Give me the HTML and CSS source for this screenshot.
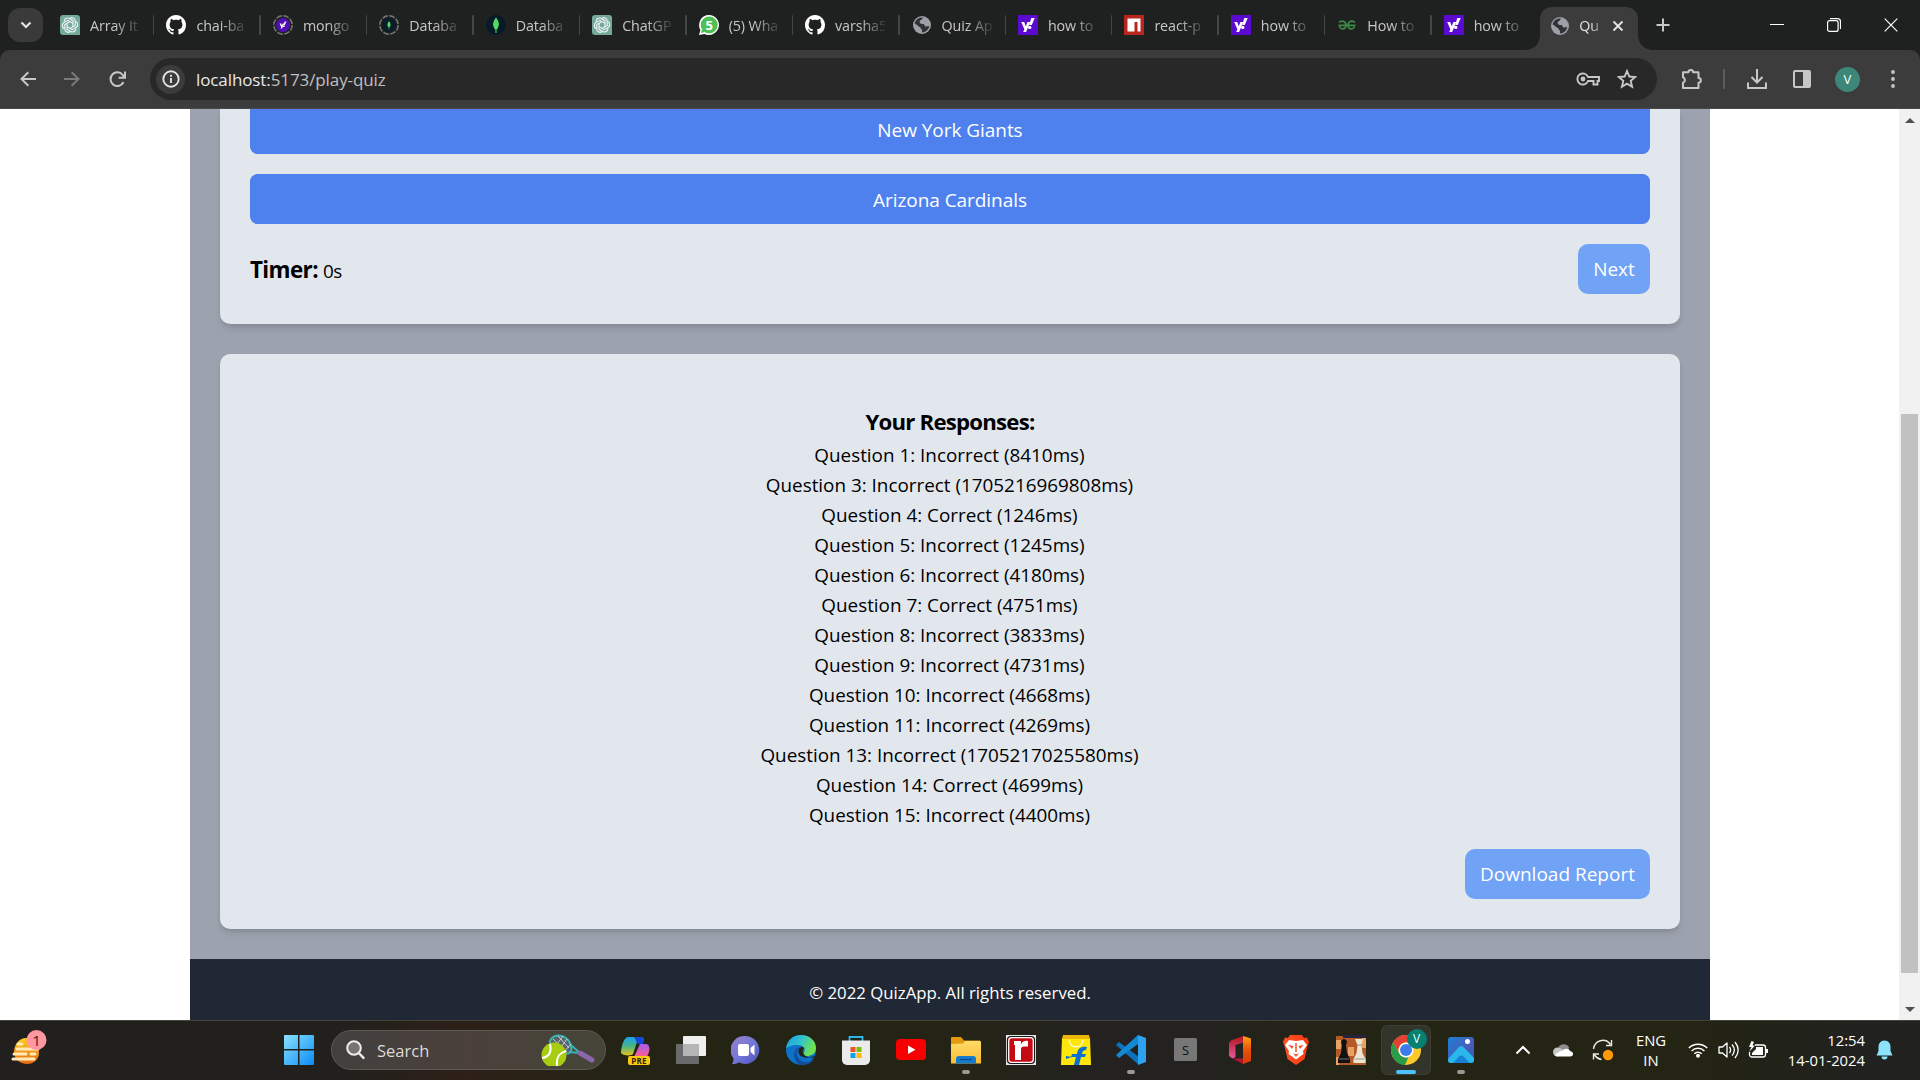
FILE: index.html
```html
<!DOCTYPE html>
<html lang="en">
<head>
<meta charset="utf-8">
<title>Quiz App</title>
<link rel="stylesheet" href="styles.css">
</head>
<body>
<svg class="defs" width="0" height="0" aria-hidden="true">
  <defs>
    <linearGradient id="g-start" x1="0" y1="0" x2="1" y2="1"><stop offset="0" stop-color="#8be1ff"/><stop offset="1" stop-color="#0a8cf5"/></linearGradient>
    <linearGradient id="g-egg" x1="0" y1="0" x2="0" y2="1"><stop offset="0" stop-color="#ffcf20"/><stop offset="1" stop-color="#e56a10"/></linearGradient>
    <linearGradient id="g-cop1" x1="0" y1="0" x2="0" y2="1"><stop offset="0" stop-color="#1aa0f0"/><stop offset=".5" stop-color="#47b585"/><stop offset="1" stop-color="#e9c51c"/></linearGradient>
    <linearGradient id="g-cop2" x1="0" y1="0" x2="0" y2="1"><stop offset="0" stop-color="#a55cf0"/><stop offset="1" stop-color="#ff5f87"/></linearGradient>
    <linearGradient id="g-chat" x1="0" y1="0" x2="1" y2="1"><stop offset="0" stop-color="#9a83c9"/><stop offset=".5" stop-color="#7377d8"/><stop offset="1" stop-color="#4d50b8"/></linearGradient>
    <linearGradient id="g-edge" x1="0" y1="0" x2="1" y2=".4"><stop offset="0" stop-color="#1c9de0"/><stop offset=".5" stop-color="#2fc0d0"/><stop offset="1" stop-color="#6fe34f"/></linearGradient>
    <linearGradient id="g-folder" x1="0" y1="0" x2="0" y2="1"><stop offset="0" stop-color="#ffdb6a"/><stop offset="1" stop-color="#fbbd32"/></linearGradient>
    <linearGradient id="g-off" x1="0" y1="0" x2="0" y2="1"><stop offset="0" stop-color="#b3151c"/><stop offset="1" stop-color="#e45aa0"/></linearGradient>
    <linearGradient id="g-off2" x1="0" y1="0" x2="0" y2="1"><stop offset="0" stop-color="#ffa514"/><stop offset=".5" stop-color="#e8500c"/><stop offset="1" stop-color="#da3a05"/></linearGradient>
    <linearGradient id="g-brave" x1="0" y1="0" x2="1" y2="0"><stop offset="0" stop-color="#ff5226"/><stop offset="1" stop-color="#f83a10"/></linearGradient>
    <linearGradient id="g-photo" x1="0" y1="0" x2="1" y2="1"><stop offset="0" stop-color="#1c7fd6"/><stop offset=".6" stop-color="#4a5bb8"/><stop offset="1" stop-color="#1b66c4"/></linearGradient>
    <symbol id="openai" viewBox="0 0 20 20">
      <path d="M3 0h14a3 3 0 0 1 3 3v17H3a3 3 0 0 1-3-3V3a3 3 0 0 1 3-3z" fill="#74a99b"/>
      <g fill="none" stroke="#eef5f2" stroke-width="1.150">
        <path d="M10 3.200a3.400 3.400 0 0 1 5.200 3v4.200l-5.200 3"/>
        <path d="M10 3.200a3.400 3.400 0 0 1 5.200 3v4.200l-5.200 3" transform="rotate(60 10 10)"/>
        <path d="M10 3.200a3.400 3.400 0 0 1 5.200 3v4.200l-5.200 3" transform="rotate(120 10 10)"/>
        <path d="M10 3.200a3.400 3.400 0 0 1 5.200 3v4.200l-5.200 3" transform="rotate(180 10 10)"/>
        <path d="M10 3.200a3.400 3.400 0 0 1 5.200 3v4.200l-5.200 3" transform="rotate(240 10 10)"/>
        <path d="M10 3.200a3.400 3.400 0 0 1 5.200 3v4.200l-5.200 3" transform="rotate(300 10 10)"/>
      </g>
    </symbol>
    <symbol id="github" viewBox="0 0 16 16"><path fill="#fff" d="M8 0C3.58 0 0 3.58 0 8c0 3.54 2.29 6.53 5.47 7.59.4.07.55-.17.55-.38 0-.19-.01-.82-.01-1.49-2.01.37-2.53-.49-2.69-.94-.09-.23-.48-.94-.82-1.13-.28-.15-.68-.52-.01-.53.63-.01 1.08.58 1.23.82.72 1.21 1.87.87 2.33.66.07-.52.28-.87.51-1.07-1.78-.2-3.64-.89-3.64-3.95 0-.87.31-1.59.82-2.15-.08-.2-.36-1.02.08-2.12 0 0 .67-.21 2.2.82.64-.18 1.32-.27 2-.27s1.36.09 2 .27c1.53-1.04 2.2-.82 2.2-.82.44 1.1.16 1.92.08 2.12.51.56.82 1.27.82 2.15 0 3.07-1.87 3.75-3.65 3.95.29.25.54.73.54 1.48 0 1.07-.01 1.93-.01 2.2 0 .21.15.46.55.38A8.01 8.01 0 0 0 16 8c0-4.42-3.58-8-8-8z"/></symbol>
    <symbol id="yahoo-mark" viewBox="0 0 20 20"><path d="M3.200 7h3l1.600 4.200L9.400 7h2.900l-4.200 10h-2.900l1.200-2.700z" fill="#fff"/><path d="M13.300 3h3.400l-2.900 7h-2.600z" fill="#fff"/><circle cx="11.700" cy="12.400" r="1.700" fill="#fff"/></symbol>
    <symbol id="yahoo" viewBox="0 0 20 20"><rect width="20" height="20" fill="#5b0bd0"/><use href="#yahoo-mark"/></symbol>
    <symbol id="globe" viewBox="0 0 20 20"><circle cx="10" cy="10" r="9" fill="#9aa0a6"/><path d="M11 2.600c-1 1-.5 2-2 2.400-1.600.4-1.600 1.800-1 3 1 1.500 3.500.4 4.300 1.500.5 1 .2 1.700 1.300 2 1.400.3 2.400-.4 3.600-.4-.3 3.400-3.500 6.400-7.200 6.400v-3c-1.500-.3-1.800-1.600-1.500-2.500-2 .2-3.300-2.800-5.800-3.600C3 5.500 6.500 1.800 11 2.600z" fill="#303134"/></symbol>
    <symbol id="leaf" viewBox="0 0 20 20"><path d="M10 2.500c3 4 4.400 8 .5 12.200V18h-1v-3.300C5.600 10.500 7 6.500 10 2.500z" fill="#4fdc63"/></symbol>
  </defs>
</svg>

<div class="screen">
  <header class="tabstrip">
    <button class="tab-search"><svg width="12" height="8" viewBox="0 0 12 8"><path d="M1.500 1.500 6 6l4.500-4.500" fill="none" stroke="#e3e3e3" stroke-width="2.200"/></svg></button>
    <nav class="tabs">
      <div class="tab"><svg class="fav"><use href="#openai"/></svg><span>Array It</span></div>
      <div class="tab"><svg class="fav"><use href="#github"/></svg><span>chai-ba</span></div>
      <div class="tab"><svg class="fav" viewBox="0 0 20 20"><circle cx="10" cy="10" r="9.200" fill="none" stroke="#777" stroke-width="1.500" stroke-dasharray="5.800 1.425"/><circle cx="10" cy="10" r="7" fill="#5010b0"/><use href="#yahoo-mark" x="5" y="5" width="10" height="10"/></svg><span>mongo</span></div>
      <div class="tab"><svg class="fav" viewBox="0 0 20 20"><circle cx="10" cy="10" r="9.200" fill="none" stroke="#777" stroke-width="1.500" stroke-dasharray="5.800 1.425"/><circle cx="10" cy="10" r="7" fill="#0a1c28"/><use href="#leaf" x="4.500" y="4.500" width="11" height="11"/></svg><span>Databa</span></div>
      <div class="tab"><svg class="fav" viewBox="0 0 20 20"><circle cx="10" cy="10" r="10" fill="#061a28"/><use href="#leaf" width="20" height="20"/></svg><span>Databa</span></div>
      <div class="tab"><svg class="fav"><use href="#openai"/></svg><span>ChatGP</span></div>
      <div class="tab"><svg class="fav" viewBox="0 0 20 20"><path d="M10 0a10 10 0 1 1-4.600 18.900L0 20l1.400-5A10 10 0 0 1 10 0z" fill="#fff"/><circle cx="10.200" cy="9.900" r="8.500" fill="#4fbf55"/><path d="M2 18l1-4 3 3z" fill="#4fbf55"/><text x="10.200" y="14.500" class="badge-5">5</text></svg><span>(5) Wha</span></div>
      <div class="tab"><svg class="fav"><use href="#github"/></svg><span>varsha5</span></div>
      <div class="tab"><svg class="fav"><use href="#globe"/></svg><span>Quiz Ap</span></div>
      <div class="tab"><svg class="fav"><use href="#yahoo"/></svg><span>how to</span></div>
      <div class="tab"><svg class="fav" viewBox="0 0 20 20"><rect width="20" height="20" fill="#b9261c"/><path d="M3.500 3.500h13v13h-3V7h-3v9.500h-7z" fill="#fff"/></svg><span>react-p</span></div>
      <div class="tab"><svg class="fav"><use href="#yahoo"/></svg><span>how to</span></div>
      <div class="tab"><svg class="fav" viewBox="0 0 20 20"><g fill="none" stroke="#3c8a45" stroke-width="1.700"><path d="M2 7.500C4.500 5 9 6 9 10.300S4 15 2.300 11.500M1.500 10.300h17M18 7.500C15.500 5 11 6 11 10.300s5 4.700 6.700 1.200"/></g></svg><span>How to</span></div>
      <div class="tab"><svg class="fav"><use href="#yahoo"/></svg><span>how to</span></div>
      <div class="tab active"><svg class="fav"><use href="#globe"/></svg><span>Qu</span><svg class="tab-close" width="12" height="12" viewBox="0 0 12 12"><path d="M1.500 1.500l9 9M10.500 1.500l-9 9" stroke="#e3e3e3" stroke-width="1.900"/></svg></div>
    </nav>
    <svg class="new-tab" width="14" height="14" viewBox="0 0 14 14"><path d="M7 .5v13M.5 7h13" stroke="#c7c7c7" stroke-width="2"/></svg>
    <div class="win-controls">
      <svg width="14" height="14" viewBox="0 0 14 14"><path d="M0 6.500h14" stroke="#fff" stroke-width="1"/></svg>
      <svg width="14" height="14" viewBox="0 0 14 14"><rect x=".6" y="2.600" width="10.500" height="10.800" rx="2" fill="none" stroke="#fff" stroke-width="1.200"/><path d="M3 .6h7.500a3 3 0 0 1 3 3V11" fill="none" stroke="#fff" stroke-width="1.200"/></svg>
      <svg width="14" height="14" viewBox="0 0 14 14"><path d="M.7.7l12.600 12.600M13.300.7.7 13.300" stroke="#fff" stroke-width="1.200"/></svg>
    </div>
  </header>

  <div class="toolbar-wrap"><div class="toolbar">
    <svg class="t-back" width="16" height="16" viewBox="0 0 16 16"><path d="M16 8H1.500M8.300 1.200 1.500 8l6.800 6.800" fill="none" stroke="#c7c7c7" stroke-width="2"/></svg>
    <svg class="t-fwd" width="16" height="16" viewBox="0 0 16 16"><path d="M0 8h14.500M7.700 1.200 14.500 8l-6.800 6.800" fill="none" stroke="#7b7b7b" stroke-width="2"/></svg>
    <svg class="t-reload" width="17" height="17" viewBox="0 0 17 17"><path d="M14.500 11A6.800 6.800 0 1 1 13.700 4L15.500 6" fill="none" stroke="#c7c7c7" stroke-width="2"/><path d="M16 .5v6.300H9.700" fill="none" stroke="#c7c7c7" stroke-width="2"/></svg>
    <div class="omnibox">
      <span class="site-info"><svg width="18" height="18" viewBox="0 0 18 18"><circle cx="9" cy="9" r="7.700" fill="none" stroke="#e3e3e3" stroke-width="1.900"/><path d="M9 8v5M9 4.800v1.900" stroke="#e3e3e3" stroke-width="1.900"/></svg></span>
      <span class="url"><b>localhost:</b>5173/play-quiz</span>
      <svg class="key" width="24" height="16" viewBox="0 0 24 16"><path d="M12 6h11v4h-1.500v3.500h-4V10H12a5.500 5.500 0 1 1 0-4z" fill="none" stroke="#c7c7c7" stroke-width="1.900"/><circle cx="7" cy="8" r="2.400" fill="#c7c7c7"/></svg>
      <svg class="star" width="20" height="20" viewBox="0 0 20 20"><path d="M10 2l2.300 5.500 5.900.5-4.500 3.900 1.400 5.800L10 14.600l-5.100 3.100 1.400-5.800L1.800 8l5.900-.5z" fill="none" stroke="#c7c7c7" stroke-width="1.900"/></svg>
    </div>
    <svg class="t-ext" width="22" height="22" viewBox="0 0 22 22"><path d="M2 4.300h5.500a2.300 2.300 0 0 1 4.600 0h5.400v5.800a2.300 2.300 0 0 1 0 4.600V20H2v-5.200a3 3 0 0 0 0-5.600z" fill="none" stroke="#c7c7c7" stroke-width="2" stroke-linejoin="round"/></svg>
    <i class="t-sep"></i>
    <svg class="t-down" width="20" height="20" viewBox="0 0 20 20"><path d="M10 0v13M4.500 8l5.500 5.500L15.500 8M1 13.500v5.400h18v-5.400" fill="none" stroke="#c7c7c7" stroke-width="2"/></svg>
    <svg class="t-side" width="18" height="18" viewBox="0 0 18 18"><rect x="1" y="1" width="16" height="16" rx="1" fill="none" stroke="#c7c7c7" stroke-width="2"/><path d="M10 1h7v16h-7z" fill="#c7c7c7"/></svg>
    <span class="avatar">V</span>
    <svg class="t-menu" width="4" height="18" viewBox="0 0 4 18"><g fill="#c7c7c7"><circle cx="2" cy="2" r="1.900"/><circle cx="2" cy="9" r="1.900"/><circle cx="2" cy="16" r="1.900"/></g></svg>
  </div></div>

  <div class="viewport">
    <main class="app">
      <section class="card quiz">
        <button class="option first">New York Giants</button>
        <button class="option">Arizona Cardinals</button>
        <div class="row"><p class="timer"><strong>Timer:</strong> <span>0s</span></p><button class="btn next">Next</button></div>
      </section>
      <section class="card results">
        <h2>Your Responses:</h2>
        <ul>
          <li>Question 1: Incorrect (8410ms)</li>
          <li>Question 3: Incorrect (1705216969808ms)</li>
          <li>Question 4: Correct (1246ms)</li>
          <li>Question 5: Incorrect (1245ms)</li>
          <li>Question 6: Incorrect (4180ms)</li>
          <li>Question 7: Correct (4751ms)</li>
          <li>Question 8: Incorrect (3833ms)</li>
          <li>Question 9: Incorrect (4731ms)</li>
          <li>Question 10: Incorrect (4668ms)</li>
          <li>Question 11: Incorrect (4269ms)</li>
          <li>Question 13: Incorrect (1705217025580ms)</li>
          <li>Question 14: Correct (4699ms)</li>
          <li>Question 15: Incorrect (4400ms)</li>
        </ul>
        <button class="btn download">Download Report</button>
      </section>
      <footer>© 2022 QuizApp. All rights reserved.</footer>
    </main>
    <aside class="scrollbar">
      <svg width="10" height="5" viewBox="0 0 10 5"><path d="M0 5l5-5 5 5z" fill="#505050"/></svg>
      <div class="thumb"></div>
      <svg width="10" height="5" viewBox="0 0 10 5"><path d="M0 0h10L5 5z" fill="#505050"/></svg>
    </aside>
  </div>

  <footer class="taskbar">
    <svg class="widget" width="36" height="36" viewBox="0 0 36 36"><path d="M15 8c8 0 13 9 13 15s-5 11-12 11S3 29 3 22 8 8 15 8z" fill="url(#g-egg)"/><g stroke="#ffe9b8" stroke-width="3" stroke-linecap="round"><path d="M7 14h4M6 19h21M3 24h12M20 24h4M2 29h21"/></g><circle cx="25.500" cy="10" r="10" fill="#ff96a0"/><text x="25.500" y="15.500" class="w-num">1</text></svg>
    <svg class="start" width="30" height="30" viewBox="0 0 30 30"><path d="M1 0h13v14H0V1a1 1 0 0 1 1-1zM15.500 0H29a1 1 0 0 1 1 1v13H15.500zM0 15.500h14V30H1a1 1 0 0 1-1-1zM15.500 15.500H30V29a1 1 0 0 1-1 1H15.500z" fill="url(#g-start)"/></svg>
    <div class="search">
      <svg width="20" height="20" viewBox="0 0 20 20"><circle cx="8" cy="8" r="6.800" fill="#777472" stroke="#eee" stroke-width="2"/><path d="M12.800 13l5.400 5.700" stroke="#eee" stroke-width="2.400"/></svg>
      <span>Search</span>
      <svg class="tennis" width="54" height="32" viewBox="0 0 54 32"><path d="M10 5C15-1 25 1 29 9c4 9-1 13-8 9S6 10 10 5z" fill="#58646a" stroke="#38b5b8" stroke-width="2"/><path d="M12 5l14 13M17 2l11 12M11 9l11 10M22 2l-9 12M26 5l-9 12M30 10l-8 9" stroke="#d5dddd" stroke-width=".9"/><path d="M30 11l9 8-11-1" fill="none" stroke="#38b5b8" stroke-width="1.800"/><path d="M39 19l12 7" stroke="#8967a8" stroke-width="5" stroke-linecap="round"/><circle cx="13" cy="21" r="12.500" fill="#a7cc12"/><path d="M9 10c2 8-1 13-8 14M25 17c-7 2-10 6-9 15" fill="none" stroke="#fff" stroke-width="2"/></svg>
    </div>
    <div class="apps">
      <div class="app-icon"><svg viewBox="0 0 30 30"><path d="M7 2h13c3 0 3 3 2 5h-6l-4 12c-1 2-10 2-12-1C0 12 3 2 7 2z" fill="url(#g-cop1)"/><path d="M13 2h7c3 0 3 3 2 7h-4c-3 0-3-5-5-7z" fill="#1648d8"/><path d="M19 9h6c3 0 4 4 3 8l-2 5H13z" fill="url(#g-cop2)"/><rect x="7" y="21" width="22" height="9" rx="2" fill="#fdc910"/><text x="18" y="28.500" class="pre">PRE</text></svg></div>
      <div class="app-icon"><svg viewBox="0 0 30 30"><rect y="9" width="23" height="20" rx="1" fill="#6a6a6a"/><rect x="7" y="1" width="23" height="20" rx="1" fill="#efefef"/><path d="M7 9h16v12H7z" fill="#b5b5b5"/></svg></div>
      <div class="app-icon"><svg viewBox="0 0 30 30"><path d="M15 1a14 14 0 1 1-7 26.500c-2 1-4 1.500-7 1.500 1-1.500 1.500-3 1.500-5.500A14 14 0 0 1 15 1z" fill="url(#g-chat)"/><rect x="7" y="9" width="11" height="12" rx="2" fill="#fff"/><path d="M19.500 13l4-3.500v11l-4-3.500z" fill="#fff"/></svg></div>
      <div class="app-icon"><svg viewBox="0 0 30 30"><circle cx="15" cy="15" r="15" fill="#0d71ca"/><path d="M0 14C1 5 7 0 15 0c9 0 15 6 15 13 0 6-5 8-9 8-3 0-4-2-3-3 2-5-1-8-6-8-6 0-11 2-12 4z" fill="url(#g-edge)"/><path d="M13 12c-5 6-1 15 7 15 4 0 6-1 8-3-3 5-8 6-13 6C8 29 5 15 13 12z" fill="#104f9e"/><path d="M17.500 19c-1-.8-1.300-4 .8-5.500-2-3-6-1-6 2.500 0 5 6 9 16 5l1.700 2.500V21c-3 3-10 2-12.500-2z" fill="#242416"/></svg></div>
      <div class="app-icon"><svg viewBox="0 0 30 30"><path d="M8.500 7V2h13v5" fill="none" stroke="#2db5ee" stroke-width="1.800"/><path d="M1 5.500h28V25a5 5 0 0 1-5 5H6a5 5 0 0 1-5-5z" fill="#ebebeb"/><path d="M9.500 12h5v5h-5z" fill="#f0512a"/><path d="M15.500 12h5v5h-5z" fill="#80bb0a"/><path d="M9.500 18h5v5h-5z" fill="#0ba4ee"/><path d="M15.500 18h5v5h-5z" fill="#ffb90b"/></svg></div>
      <div class="app-icon"><svg viewBox="0 0 30 30"><rect y="4" width="30" height="21" rx="4" fill="#f80000"/><path d="M12 10.500v8.500l7.500-4.200z" fill="#fff"/></svg></div>
      <div class="app-icon run"><svg viewBox="0 0 30 30"><path d="M0 3a1 1 0 0 1 1-1h9l3 3.500h16v6H0z" fill="#e39a0d"/><path d="M0 9l12-.500 2-2.500h15a1 1 0 0 1 1 1v21.500H0z" fill="url(#g-folder)"/><path d="M5 28.500V24a3 3 0 0 1 3-3h14a3 3 0 0 1 3 3v4.500z" fill="#157bcd"/><path d="M9 24.500h12" stroke="#0a4d91" stroke-width="1.300"/></svg></div>
      <div class="app-icon"><svg viewBox="0 0 30 30"><path fill="#e6e6e6" d="M0 0h30v30H0z"/><rect x="1.500" y="1.500" width="27" height="27" rx="3.500" fill="#c40a12" stroke="#17181b" stroke-width="1.200"/><rect x="2.700" y="2.700" width="24.600" height="24.600" rx="3" fill="none" stroke="#fff" stroke-width="1.300"/><path d="M8 6h7v3c2-3 4-3.500 7-3v5.500h-4c-2 0-3 1-3 3V25H9V10H8z" fill="#fff"/></svg></div>
      <div class="app-icon"><svg viewBox="0 0 30 30"><path d="M1 3h28l1 27H0z" fill="#ffe70c"/><path d="M2 0h26l1 4H1z" fill="#edb60b"/><path d="M8 5c1 9 13 9 14 0" fill="none" stroke="#fff8c9" stroke-width="1.500"/><path d="M26 12c-6-1-9 1-10 7h-5l-1 3h5l-2 8h5l2-8h4l1-3h-4c0-3 2-4 4-4z" fill="#0a6fd0"/><path d="M5 21l6 1-6 2" fill="#0a6fd0"/></svg></div>
      <div class="app-icon run"><svg viewBox="0 0 30 30"><path d="M3 7l20 15v8L0 10z" fill="#0c73bd"/><path d="M0 20L22 0v9L3 23z" fill="#1389d4"/><path d="M22 0l8 3v24l-8 3z" fill="#2ea2ef"/></svg></div>
      <div class="app-icon"><svg viewBox="0 0 30 30"><rect x="3" y="3" width="23" height="23" rx="1.500" fill="#777"/><text x="14.500" y="19.500" class="s-letter">S</text></svg></div>
      <div class="app-icon"><svg viewBox="0 0 30 30"><path d="M17 1L5 5.500 3 8v13l3.500 2.500 3-1.500V10L17 7.500z" fill="url(#g-off)"/><path d="M17 1l8 2.500V26l-8 3z" fill="url(#g-off2)"/><path d="M6.500 23.500H17V29z" fill="#b3152a"/></svg></div>
      <div class="app-icon"><svg viewBox="0 0 30 30"><path d="M9 0h12l2 3 3-.500L28 7l-1.500 4-3 13L15 30l-8.500-6-3-13L2 7l2-4.500L7 3z" fill="url(#g-brave)"/><path d="M8 5l7 1 7-1 4 5-4 6 .5 3-3.500 2.500-4 3-4-3L7.500 19l.5-3-4-6z" fill="#fff"/><path d="M7 10l5.500 1-1.500 3-1.500-2zM23 10l-5.500 1 1.500 3 1.500-2zM12 18l3 1.500 3-1.500-3 4zM14.300 8h1.400v9h-1.400z" fill="#fa4620"/></svg></div>
      <div class="app-icon"><svg viewBox="0 0 30 30"><path fill="#b45a28" d="M0 1h30v29H0z"/><path fill="#e8a263" d="M0 5h5v9H0zM12 12h6v9h-6zM26 3h4v10h-4zM0 22h3v8H0z"/><path fill="#25233f" d="M7 0h23v3H7z"/><path d="M8 4a3 3 0 0 1 2.500 4.500L10 10l1 8 3 6v4H2v-4l3-6 1-8-.5-1.500A3 3 0 0 1 8 4z" fill="#11110f"/><path d="M19 4h8l-1.500 6 1 8 3 6v4h-12v-4l3-6 1-8z" fill="#ece5d0"/><path d="M3 24h10M18.500 24h10M20.500 10h5" stroke="#888" stroke-width=".8"/></svg></div>
      <div class="app-icon current"><svg viewBox="0 0 30 30"><circle cx="15" cy="15" r="15" fill="#fcc92b"/><path d="M2 7.500A15 15 0 0 1 28 7.500H15a7.500 7.500 0 0 0-6.500 11z" fill="#e34133"/><path d="M2 7.500l6.500 11.300a7.500 7.500 0 0 0 9 3.200L14 30A15 15 0 0 1 2 7.500z" fill="#2a9d48"/><circle cx="15" cy="15" r="7.500" fill="#fff"/><circle cx="15" cy="15" r="6" fill="#3d7bea"/></svg><em>V</em></div>
      <div class="app-icon run"><svg viewBox="0 0 30 30"><rect x="2" y="2" width="26" height="26" rx="3" fill="url(#g-photo)"/><path d="M2 24l11-12c1.500-1.500 3-1.500 4.500 0L28 23v2a3 3 0 0 1-3 3H5a3 3 0 0 1-3-3z" fill="#2ab8ea"/><path d="M7 28l6-6.500c1.500-1.500 3-1.500 4.500 0L24 28z" fill="#1880d6"/><circle cx="21.500" cy="6.500" r="2.500" fill="#fff"/></svg></div>
    </div>
    <div class="tray">
      <svg width="16" height="10" viewBox="0 0 16 10"><path d="M1.500 8.500L8 2l6.500 6.500" fill="none" stroke="#fff" stroke-width="2"/></svg>
      <svg width="20" height="14" viewBox="0 0 20 14"><path d="M5 8a6 6 0 0 1 11-4l-1 6z" fill="#8d8d89"/><path d="M4.500 13.500a4.500 4.500 0 0 1 0-9c3 0 6 3 8 5z" fill="#c6c6c4"/><path d="M2 12c2-2 5-4 7-4 2-3 7-3 8 0 4 .5 4 5.500 0 5.500H4z" fill="#fff"/></svg>
      <svg width="22" height="22" viewBox="0 0 22 22"><path d="M1.500 10C2.500 1.500 13-2 18.500 5.500M19.500 1v5.500H14M1.500 20.500V15H7M2.500 16c2 3 4 4 7 4.500" fill="none" stroke="#e8e8e4" stroke-width="1.400"/><circle cx="16" cy="16" r="5.200" fill="#ff9806"/></svg>
      <div class="lang">ENG<br>IN</div>
      <svg width="20" height="16" viewBox="0 0 20 16"><g fill="none" stroke="#fff" stroke-width="1.500"><path d="M.8 6a13 13 0 0 1 18.400 0M3.600 9a9 9 0 0 1 12.800 0M6.300 11.800a5.200 5.200 0 0 1 7.400 0"/></g><circle cx="10" cy="13.800" r="2" fill="#fff"/></svg>
      <svg width="21" height="18" viewBox="0 0 21 18"><path d="M1 6v6h3.500L9 16V2L4.500 6zM11.500 6c1.500 2 1.500 4 0 6M14 3.500c3 3.500 3 7.500 0 11M17 1c4 5 4 11 0 16" fill="none" stroke="#fff" stroke-width="1.300" stroke-linejoin="round"/></svg>
      <svg width="21" height="18" viewBox="0 0 21 18"><path d="M7 4h8a2.500 2.500 0 0 1 2.500 2.500v7A2.500 2.500 0 0 1 15 16H4a2.500 2.500 0 0 1-2.500-2.500V11" fill="none" stroke="#fff" stroke-width="1.300"/><path d="M8 6h7v8H4v-2l4-4zM18 8h2v4h-2z" fill="#fff"/><path d="M3.500 0L1 6h2.500L1 11l6-6.500H4.500L6 1z" fill="#fff"/></svg>
      <div class="clock">12:54<br>14-01-2024</div>
      <svg width="17" height="20" viewBox="0 0 17 20"><path d="M8.500.5c4 0 6 3 6 6.500v4l2 4.500H.5l2-4.500V7c0-3.500 2-6.500 6-6.500zM5.500 16.500h6a3 3 0 0 1-6 0z" fill="#8de3fb"/></svg>
    </div>
  </footer>
</div>
</body>
</html>
```
FILE: styles.css
```css
* { box-sizing: border-box; }
body { margin: 0; background: #202221; }
body, button { font-family: "Open Sans", "Noto Sans", sans-serif; }
button { border: 0; padding: 0; margin: 0; }
svg { display: block; flex: none; }
.defs { position: absolute; }
.screen { width: 1920px; height: 1080px; display: flex; flex-direction: column; overflow: hidden; }

/* tab strip */
.tabstrip { height: 50px; flex: none; display: flex; background: #1f2120; }
.tab-search { width: 35px; height: 34px; margin: 8px 5px 0 8px; border-radius: 12px; background: #3a3a3a; display: grid; place-items: center; }
.tabs { display: flex; flex: none; }
.tab { width: 106.450px; height: 50px; padding-left: 12px; display: flex; align-items: center; gap: 10px; color: #c7c7c7; font-size: 14.300px; letter-spacing: -.1px; }
.tab .fav { width: 20px; height: 20px; }
.tab span { width: 50px; flex: none; white-space: nowrap; -webkit-mask-image: linear-gradient(90deg, #000 50%, rgba(0,0,0,.15) 98%); mask-image: linear-gradient(90deg, #000 50%, rgba(0,0,0,.15) 98%); }
.tab:not(:nth-child(14)):not(.active)::after { content: ""; width: 2px; height: 20px; margin-left: 3px; background: #444645; border-radius: 1px; }
.tab.active { position: relative; width: 98px; height: 43px; margin: 7px 0 0 2px; padding: 0 0 6px 10px; border-radius: 12px 12px 0 0; background: #3c3c3c; color: #e3e3e3; }
.tab.active::before, .tab.active::after { content: ""; position: absolute; bottom: 0; width: 14px; height: 14px; }
.tab.active::before { left: -14px; background: radial-gradient(circle at 0 0, transparent 13.5px, #3c3c3c 14px); }
.tab.active::after { right: -14px; background: radial-gradient(circle at 100% 0, transparent 13.5px, #3c3c3c 14px); }
.tab.active span { width: 24px; margin-right: 4px; margin-left: -1px; }
.tab-close { margin-left: -5px; }
.new-tab { margin: 18px 0 0 18px; }
.win-controls { display: flex; gap: 43px; margin: 18px 22px 0 auto; }
.badge-5 { font: bold 13px "Open Sans", sans-serif; fill: #fff; text-anchor: middle; }

/* toolbar */
.toolbar-wrap { flex: none; background: #1f2120; }
.toolbar { height: 59px; display: flex; align-items: center; background: #3c3c3c; border-radius: 10px 10px 0 0; border-bottom: 1px solid #4a4848; }
.t-back { margin-left: 20px; }
.t-fwd { margin-left: 28px; }
.t-reload { margin-left: 29px; }
.omnibox { width: 1507px; height: 42px; flex: none; margin-left: 24px; padding-left: 6px; display: flex; align-items: center; border-radius: 21px; background: #282828; }
.site-info { width: 29px; height: 29px; border-radius: 50%; background: #3c3c3c; display: grid; place-items: center; }
.url { margin-left: 11px; font-size: 17px; letter-spacing: -.1px; color: #c0c0c0; }
.url b { font-weight: 400; color: #e8e8e8; }
.key { margin-left: auto; }
.star { margin: 0 20px 0 17px; }
.t-ext { margin-left: 24px; }
.t-sep { width: 2px; height: 20px; margin-left: 20px; background: #5c5c5c; }
.t-down { margin-left: 22px; }
.t-side { margin-left: 26px; }
.avatar { width: 25px; height: 25px; margin-left: 24px; border-radius: 50%; background: #3c8778; color: #fff; font-size: 13px; line-height: 25px; text-align: center; }
.t-menu { margin-left: 31px; }

/* page */
.viewport { height: 911px; flex: none; display: flex; background: #fff; overflow: hidden; }
.app { width: 1520px; margin-left: 190px; padding: 0 30px; background: #9ca2ae; display: flex; flex-direction: column; flex: none; }
.card { padding: 30px; background: #e2e7ee; border-radius: 10px; box-shadow: 0 5px 7.500px -1px rgba(0,0,0,.1), 0 2.500px 5px -2.500px rgba(0,0,0,.1); flex: none; }
.quiz { height: 215px; padding-top: 0; border-radius: 0 0 10px 10px; }
.option { display: block; width: 100%; height: 50px; margin-bottom: 20px; border-radius: 7.500px; background: #4e81ee; color: #fff; font-size: 19px; line-height: 52px; letter-spacing: -.05px; }
.option.first { height: 45px; padding-bottom: 3px; line-height: 42px; border-radius: 0 0 7.500px 7.500px; }
.row { display: flex; justify-content: space-between; height: 50px; }
.timer { margin: 0; line-height: 52px; font-size: 18.900px; }
.timer strong { font-size: 22.400px; font-weight: 700; letter-spacing: -.6px; }
.timer span { letter-spacing: -.5px; }
.btn { height: 50px; padding-top: 1px; border-radius: 10px; background: #70a2f5; color: #fff; font-size: 19px; line-height: 49px; }
.next { width: 72px; }
.results { height: 575px; margin-top: 30px; display: flex; flex-direction: column; }
.results h2 { margin: 20px 0 0; font-size: 22.200px; font-weight: 700; line-height: 36px; letter-spacing: -.780px; text-align: center; }
.results ul { margin: 0 1px 0 0; padding: 0; list-style: none; text-align: center; font-size: 18.860px; line-height: 30px; }
.download { width: 185px; margin: 19px 0 0 auto; }
.app > footer { margin: 30px -30px 0; flex: 1; padding-top: 18px; background: #212835; color: #fff; font-size: 16.800px; line-height: 32px; text-align: center; }
.scrollbar { width: 21px; margin-left: auto; padding: 9px 0 8px; display: flex; flex-direction: column; align-items: center; background: #f1f1f1; }
.thumb { width: 17px; height: 559px; margin: 291px 0 auto; background: #c1c1c1; }

/* taskbar */
.taskbar { height: 60px; flex: none; display: flex; align-items: center; padding-bottom: 1px; border-top: 1px solid #45443a; background: linear-gradient(90deg, #21201e 0, #22201c 350px, #2d2018 460px, #242414 610px, #242416 960px, #232220 1090px, #232220 1180px, #232414 1380px, #232414 1700px, #21211f 1860px); }
.widget { margin-left: 11px; margin-bottom: 5px; }
.w-num { font: 15px "Open Sans", sans-serif; fill: #3b1d20; text-anchor: middle; }
.start { margin-left: 237px; }
.search { width: 275px; height: 40px; margin-left: 17px; padding: 0 10px 0 14px; display: flex; align-items: center; border: 1px solid #5d5955; border-radius: 20px; background: linear-gradient(90deg, #42403e, #4b403b 50%, #454538); color: #dcdad8; font-size: 16.500px; }
.search span { margin-left: 11px; }
.tennis { margin-left: auto; }
.apps { display: flex; margin-left: 2px; }
.app-icon { position: relative; width: 55px; height: 50px; display: flex; justify-content: center; align-items: center; }
.app-icon svg { width: 30px; height: 30px; }
.app-icon.run::after, .app-icon.current::after { content: ""; position: absolute; bottom: 1px; width: 8px; height: 4px; border-radius: 2px; background: #989894; }
.app-icon.current { width: 50px; margin: 0 2.500px; border-radius: 6px; background: #33342a; border: 1px solid #3d3e34; }
.app-icon.current::after { bottom: 0; width: 20px; background: #4cc2ff; }
.app-icon em { position: absolute; top: 3px; right: 3px; width: 20px; height: 20px; border-radius: 50%; background: #078071; color: #e5fffa; font: 12px/20px "Open Sans", sans-serif; text-align: center; }
.pre { font: bold 8px "Open Sans", sans-serif; fill: #2b230a; text-anchor: middle; letter-spacing: .3px; }
.s-letter { font: 13px "Open Sans", sans-serif; fill: #111; text-anchor: middle; }
.tray { display: grid; grid-template-columns: 40px 40px 40px 56px 38px 22px 38px 88px 38px; align-items: center; justify-items: center; margin-left: 15px; color: #fff; font-size: 14.800px; line-height: 20px; }
.lang { text-align: center; }
.clock { justify-self: end; text-align: right; white-space: nowrap; }
```
